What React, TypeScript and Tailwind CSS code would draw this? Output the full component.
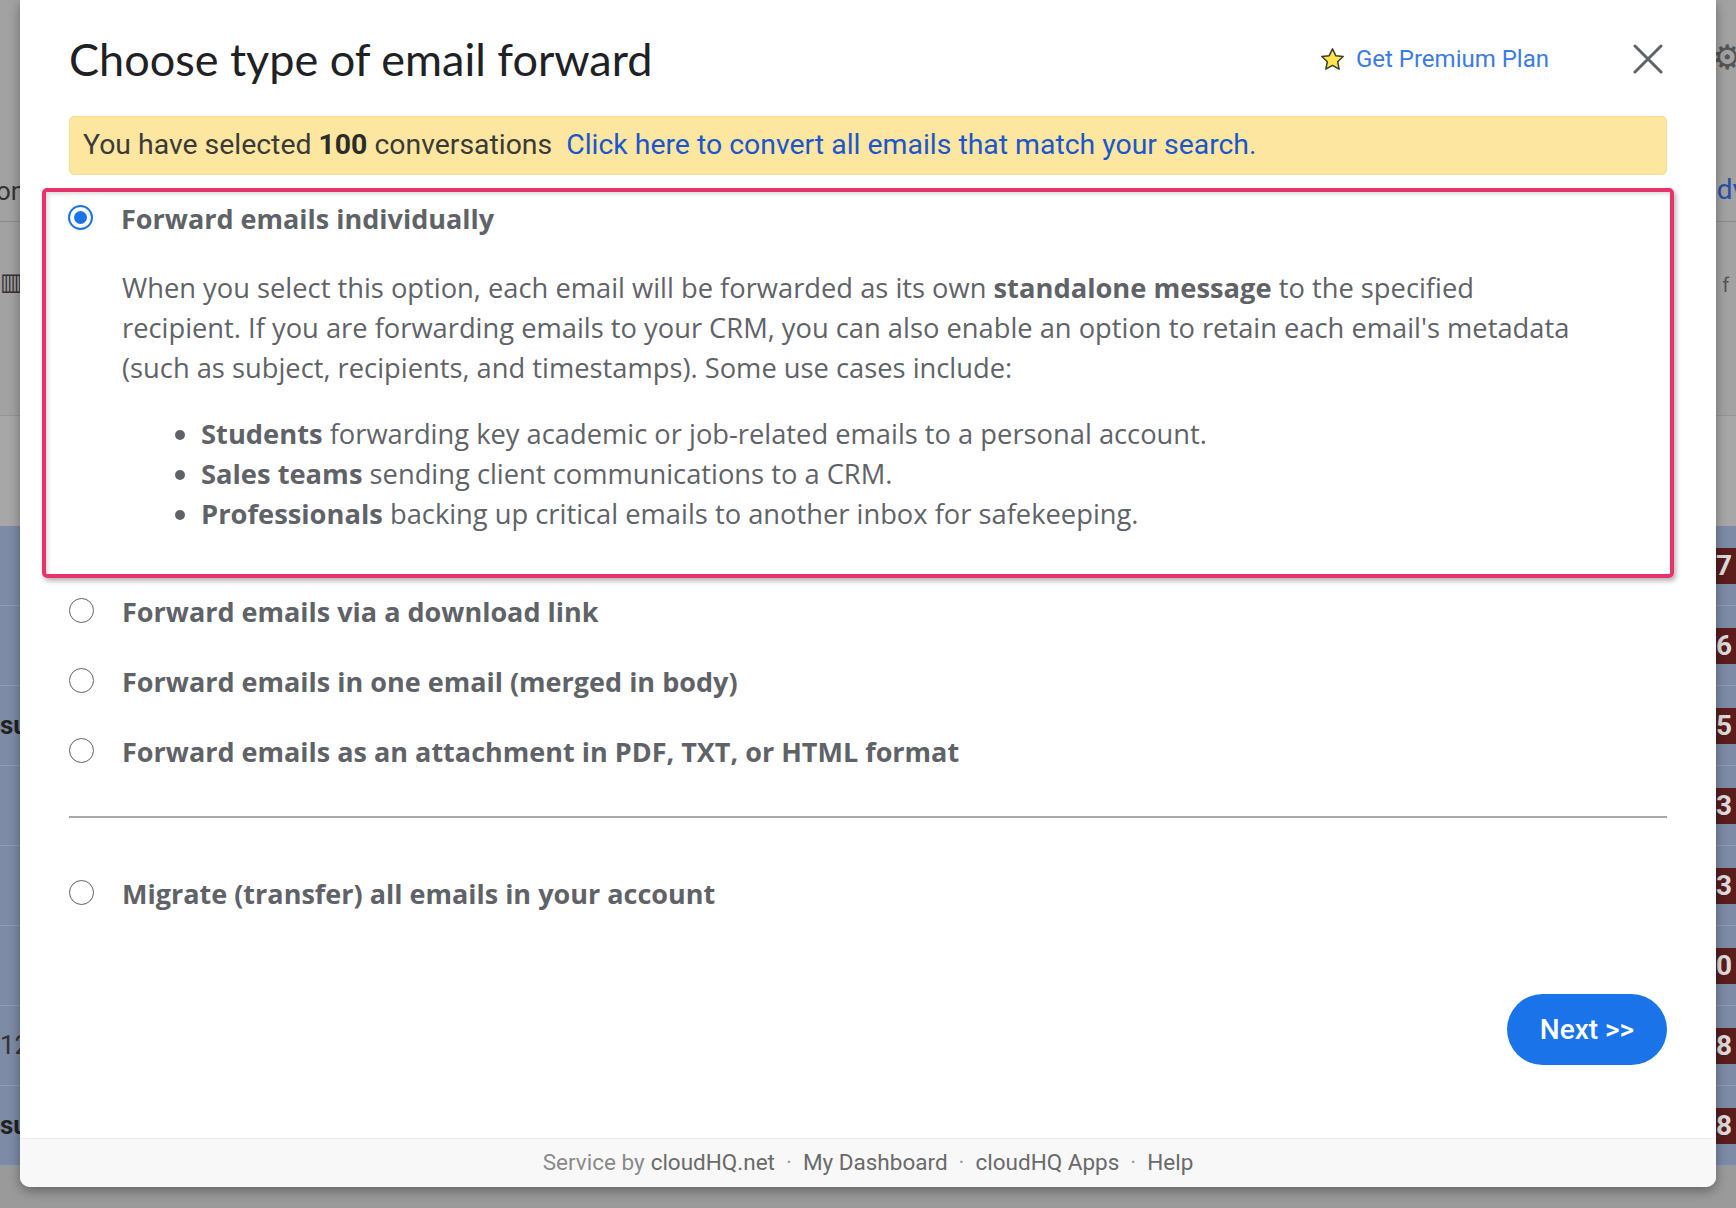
import React from "react";

const Radio = ({ checked }: { checked?: boolean }) =>
  checked ? (
    <span className="flex h-[25px] w-[25px] shrink-0 items-center justify-center rounded-full border-[2px] border-[#1a73e8] bg-white">
      <span className="block h-[13px] w-[13px] rounded-full bg-[#1a73e8]" />
    </span>
  ) : (
    <span className="block h-[25px] w-[25px] shrink-0 rounded-full border-[1.5px] border-[#5f6368] bg-white" />
  );

const Option = ({ label }: { label: string }) => (
  <div className="flex h-[40px] items-center">
    <span className="-mt-[4px] block shrink-0">
      <Radio />
    </span>
    <span className="ml-[28px] text-[27px] font-bold text-[#5f6368] [font-family:'Open_Sans',sans-serif]">
      {label}
    </span>
  </div>
);

const badgeNums = ["7", "6", "5", "3", "3", "30", "28", "28"];

export default function App() {
  return (
    <div className="relative h-[1208px] w-[1736px] overflow-hidden bg-[#9e9e9e] [font-family:Roboto,'Liberation_Sans',sans-serif]">
      {/* Background (dimmed app) */}
      <div className="flex h-full w-full flex-col">
        <div className="flex h-[526px] flex-col bg-[#a2a2a2]">
          <div className="flex h-[221px] flex-col justify-between pb-[10px] pt-[40px]">
            <div className="flex justify-end">
              <span className="mr-[-6px] text-[34px] leading-none text-[#555]">⚙</span>
            </div>
            <div className="flex items-end justify-between">
              <span className="-ml-[4px] text-[26px] text-[#333]">on</span>
              <span className="mr-[-10px] text-[28px] text-[#2a4fa8]">dv</span>
            </div>
          </div>
          <div className="flex h-[194px] items-start justify-between border-t border-[#8a8a8a] pt-[48px]">
            <span className="text-[24px] leading-none text-[#333]">▥</span>
            <span className="mr-[-12px] text-[20px] tracking-[6px] text-[#555]">fr</span>
          </div>
          <div className="flex-1 border-t border-[#959595] bg-[#a7a7a7]" />
        </div>
        {badgeNums.map((n, i) => (
          <div
            key={i}
            className="flex h-[80px] items-center justify-between border-b border-[#8e9bb3] bg-[#7d8ba6]"
          >
            <span className="text-[26px] font-bold text-[#222]">
              {i === 2 || i === 7 ? "su" : i === 6 ? <span className="font-normal text-[#333]">12</span> : ""}
            </span>
            <span className="mr-[-20px] flex h-[36px] items-center bg-[#5a1c1c] pl-[4px] pr-[24px] text-[28px] font-bold text-[#ddd]">
              {n}
            </span>
          </div>
        ))}
        <div className="flex-1 bg-[#9a9a9a]" />
      </div>

      {/* Modal */}
      <div className="absolute left-[20px] top-0 flex h-[1187px] w-[1696px] flex-col overflow-hidden rounded-b-[10px] bg-white shadow-[0_4px_12px_rgba(0,0,0,0.35)]">
        <div className="flex flex-1 flex-col px-[49px]">
          {/* Header */}
          <div className="flex h-[116px] items-center pt-[2px]">
            <h1 className="text-[45px] font-normal leading-none text-[#202124] [font-family:Lato,sans-serif]">
              Choose type of email forward
            </h1>
            <div className="flex-1" />
            <div className="flex items-center">
              <svg width="27" height="27" viewBox="0 0 24 24">
                <path
                  d="M12 2.5l2.9 6.1 6.6.8-4.9 4.6 1.3 6.6L12 17.3l-5.9 3.3 1.3-6.6-4.9-4.6 6.6-.8z"
                  fill="#fde54d"
                  stroke="#3a3a2a"
                  strokeWidth="1.3"
                  strokeLinejoin="round"
                />
              </svg>
              <span className="ml-[10px] text-[24px] text-[#3b7be6]">Get Premium Plan</span>
            </div>
            <svg className="ml-[84px] mr-[4px]" width="30" height="30" viewBox="0 0 30 30">
              <path d="M2 2L28 28M28 2L2 28" stroke="#5f6368" strokeWidth="3" strokeLinecap="round" />
            </svg>
          </div>

          {/* Banner */}
          <div className="flex h-[59px] items-center rounded-[5px] border border-[#f3dc94] bg-[#fde69f] px-[13px] text-[28.4px] text-[#3a3a3a]">
            <span>
              You have selected <b className="font-bold text-[#2b2b2b]">100</b> conversations
            </span>
            <span className="ml-[14px] text-[#1a57cf]">Click here to convert all emails that match your search.</span>
          </div>

          {/* Selected option (highlighted) */}
          <div className="ml-[-27px] mr-[-7px] mt-[13px] rounded-[5px] border-[4px] border-[#e8336a] pb-[40px] pl-[22px] pr-[20px] pt-[7px] shadow-[inset_2px_2px_4px_rgba(0,0,0,0.15),2px_3px_5px_rgba(0,0,0,0.3)]">
            <div className="flex h-[40px] items-center">
              <span className="-mt-[4px] block shrink-0">
                <Radio checked />
              </span>
              <span className="ml-[28px] text-[27px] font-bold text-[#5f6368] [font-family:'Open_Sans',sans-serif]">
                Forward emails individually
              </span>
            </div>
            <div className="ml-[54px] mt-[29px] whitespace-nowrap text-[27.3px] leading-[40px] text-[#5f6368] [font-family:'Open_Sans',sans-serif]">
              <p>
                When you select this option, each email will be forwarded as its own{" "}
                <b className="font-bold">standalone message</b> to the specified
                <br />
                recipient. If you are forwarding emails to your CRM, you can also enable an option to retain each
                email's metadata
                <br />
                (such as subject, recipients, and timestamps). Some use cases include:
              </p>
              <ul className="mt-[26px] list-disc pl-[79px]">
                <li>
                  <b className="font-bold">Students</b> forwarding key academic or job-related emails to a personal
                  account.
                </li>
                <li>
                  <b className="font-bold">Sales teams</b> sending client communications to a CRM.
                </li>
                <li>
                  <b className="font-bold">Professionals</b> backing up critical emails to another inbox for
                  safekeeping.
                </li>
              </ul>
            </div>
          </div>

          {/* Other options */}
          <div className="mt-[14px] flex flex-col gap-[30px]">
            <Option label="Forward emails via a download link" />
            <Option label="Forward emails in one email (merged in body)" />
            <Option label="Forward emails as an attachment in PDF, TXT, or HTML format" />
          </div>

          <div className="mt-[44px] h-[2px] bg-[#a8a8a8]" />

          <div className="mt-[56px]">
            <Option label="Migrate (transfer) all emails in your account" />
          </div>

          <div className="mt-[80px] flex justify-end">
            <button className="h-[71px] w-[160px] rounded-full bg-[#1a73e8] text-[28px] font-medium text-white">
              Next &gt;&gt;
            </button>
          </div>
        </div>

        {/* Footer */}
        <div className="flex h-[49px] shrink-0 items-center justify-center border-t border-[#ececec] bg-[#f8f8f8] text-[22.5px] text-[#6a6a6a]">
          <span className="text-[#8a8a8a]">Service by</span>
          <span className="ml-[6px]">cloudHQ.net</span>
          <span className="mx-[11px] text-[#999]">·</span>
          <span>My Dashboard</span>
          <span className="mx-[11px] text-[#999]">·</span>
          <span>cloudHQ Apps</span>
          <span className="mx-[11px] text-[#999]">·</span>
          <span>Help</span>
        </div>
      </div>
    </div>
  );
}
